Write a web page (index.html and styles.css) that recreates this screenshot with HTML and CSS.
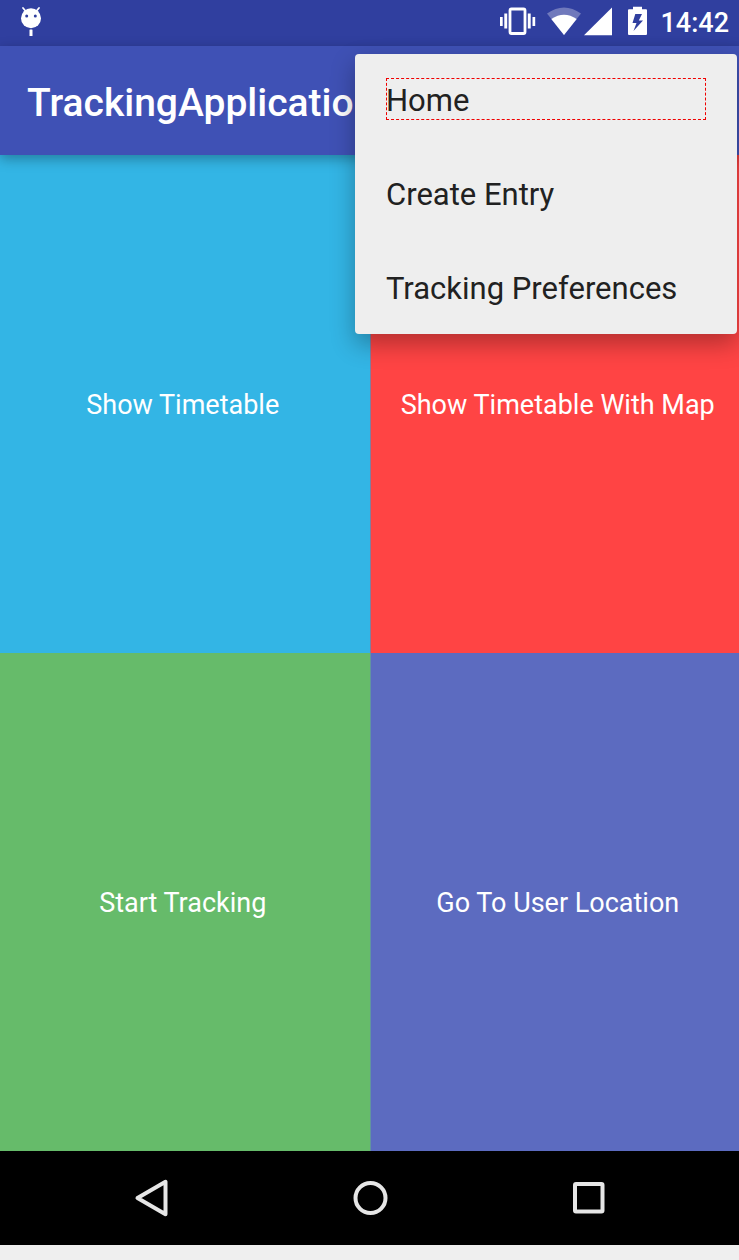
FILE: index.html
```html
<!DOCTYPE html>
<html lang="en">
<head>
<meta charset="utf-8">
<meta name="viewport" content="width=device-width, initial-scale=1">
<title>TrackingApplication</title>
<link rel="stylesheet" href="styles.css">
</head>
<body>
<div class="screen">
  <div class="status">
    <svg class="robot" width="22" height="30" viewBox="0 0 22 30" aria-hidden="true">
      <path d="M3 2L6 5.500M19 2L16 5.500" stroke="#fff" stroke-width="1.800" stroke-linecap="round"/>
      <circle cx="11" cy="12.300" r="10" fill="#fff"/>
      <circle cx="6.700" cy="10" r="1.500" fill="#303f9f"/>
      <circle cx="15.300" cy="10" r="1.500" fill="#303f9f"/>
      <rect x="9.500" y="23.500" width="3" height="7" rx=".5" fill="#fff"/>
    </svg>
    <div class="indicators">
      <svg width="36" height="30" viewBox="0 0 36 30" aria-hidden="true">
        <path fill="#fff" d="M0 11h2.700v9H0zM4.300 7.500h2.900v15H4.300zM27.800 7.500h2.900v15h-2.900zM32.500 11h2.700v9h-2.700z"/>
        <rect x="10" y="3" width="15" height="24.500" rx="1.500" fill="none" stroke="#fff" stroke-width="2.800"/>
      </svg>
      <svg class="wifi" width="34" height="30" viewBox="0 0 34 30" aria-hidden="true">
        <path d="M0 7.500Q17-4.500 34 7.500L17 29z" fill="#7079bc"/>
        <path d="M4.300 13Q17 4.500 29.700 13L17 29z" fill="#fff"/>
      </svg>
      <svg class="signal" width="28" height="30" viewBox="0 0 28 30" aria-hidden="true">
        <path d="M0 29.300L28 1.500v27.800z" fill="#fff"/>
      </svg>
      <svg class="battery" width="19" height="30" viewBox="0 0 19 30" aria-hidden="true">
        <path d="M5 .7h9v2.600h4q1 0 1 1V28q0 1-1 1H1q-1 0-1-1V4.300q0-1 1-1H5z" fill="#fff"/>
        <path d="M7.300 8H14L10.800 14.500H15L5.500 25L8.500 17H4.500z" fill="#303f9f"/>
      </svg>
      <time class="clock">14:42</time>
    </div>
  </div>
  <header class="appbar">
    <h1 class="title">TrackingApplication</h1>
    <nav class="menu" aria-label="Options">
      <button class="item focused" type="button">Home</button>
      <button class="item" type="button">Create Entry</button>
      <button class="item" type="button">Tracking Preferences</button>
    </nav>
  </header>
  <main class="tiles">
    <button class="tile left blue" type="button">Show Timetable</button>
    <button class="tile right red" type="button">Show Timetable With Map</button>
    <button class="tile left green" type="button">Start Tracking</button>
    <button class="tile right indigo" type="button">Go To User Location</button>
  </main>
  <nav class="navbar" aria-label="System">
    <button class="key" type="button" aria-label="Back">
      <svg width="40" height="40" viewBox="0 0 40 40"><path d="M4.500 20L32.500 3.800v32.400z" fill="none" stroke="#e6e6e6" stroke-width="4" stroke-linejoin="round"/></svg>
    </button>
    <button class="key" type="button" aria-label="Home">
      <svg width="40" height="40" viewBox="0 0 40 40"><circle cx="19.500" cy="20" r="15" fill="none" stroke="#e6e6e6" stroke-width="4"/></svg>
    </button>
    <button class="key" type="button" aria-label="Recent apps">
      <svg width="40" height="40" viewBox="0 0 40 40"><rect x="6" y="6" width="27.500" height="27.500" rx="1" fill="none" stroke="#e6e6e6" stroke-width="4"/></svg>
    </button>
  </nav>
</div>
</body>
</html>
```

FILE: styles.css
```css
* {
  box-sizing: border-box;
}

body {
  margin: 0;
  background: #efefef;
  font-family: Roboto, "Noto Sans", sans-serif;
}

button {
  margin: 0;
  border: 0;
  background: none;
  font: inherit;
  cursor: pointer;
}

svg {
  display: block;
}

.screen {
  display: flex;
  flex-direction: column;
  min-height: 100vh;
  padding-bottom: 15px;
}

.status {
  display: flex;
  align-items: flex-start;
  justify-content: space-between;
  padding: 6px 10px 6px 20px;
  background: #303f9f;
}

.indicators {
  display: flex;
  align-items: flex-start;
}

.wifi {
  margin-left: 11px;
}

.signal {
  margin-left: 3px;
}

.battery {
  margin-left: 16px;
}

.clock {
  margin-left: 13px;
  color: #fff;
  font-size: 27px;
  font-weight: 500;
  line-height: 34px;
}

.appbar {
  position: relative;
  z-index: 1;
  padding: 35px 27px 29px;
  background: #3f51b5;
  box-shadow: 0 4px 12px rgba(0, 0, 0, 0.3);
}

.title {
  margin: 0;
  color: #fff;
  font-size: 39px;
  font-weight: 500;
  line-height: 45px;
}

.menu {
  position: absolute;
  top: 8px;
  right: 2px;
  display: flex;
  flex-direction: column;
  gap: 52px;
  width: 382px;
  padding: 24px 31px 26px;
  border-radius: 4px;
  background: #eee;
  box-shadow: 0 10px 24px rgba(0, 0, 0, 0.3);
}

.item {
  height: 42px;
  padding: 4px 0 0;
  color: #212121;
  font-size: 31px;
  line-height: 38px;
  text-align: left;
}

.focused {
  outline: 1px dashed #f00000;
  outline-offset: -1px;
}

.tiles {
  display: grid;
  flex: 1;
  grid-template-columns: 1fr 1fr;
  grid-template-rows: 1fr 1fr;
}

.tile {
  color: #fff;
  font-size: 27px;
  line-height: 32px;
  white-space: nowrap;
}

.left {
  padding: 2px 4px 0 0;
}

.right {
  padding: 2px 0 0 6px;
  border-left: 1px solid #857b9b;
}

.blue {
  background: #33b5e5;
}

.red {
  background: #ff4444;
}

.green {
  background: #66bb6a;
}

.indigo {
  border-left-color: #6293a0;
  background: #5c6bc0;
}

.navbar {
  display: grid;
  grid-template-columns: repeat(3, 218px);
  justify-content: center;
  padding-left: 2px;
  background: #000;
}

.key {
  display: flex;
  justify-content: center;
  padding: 27px 0;
}
```
